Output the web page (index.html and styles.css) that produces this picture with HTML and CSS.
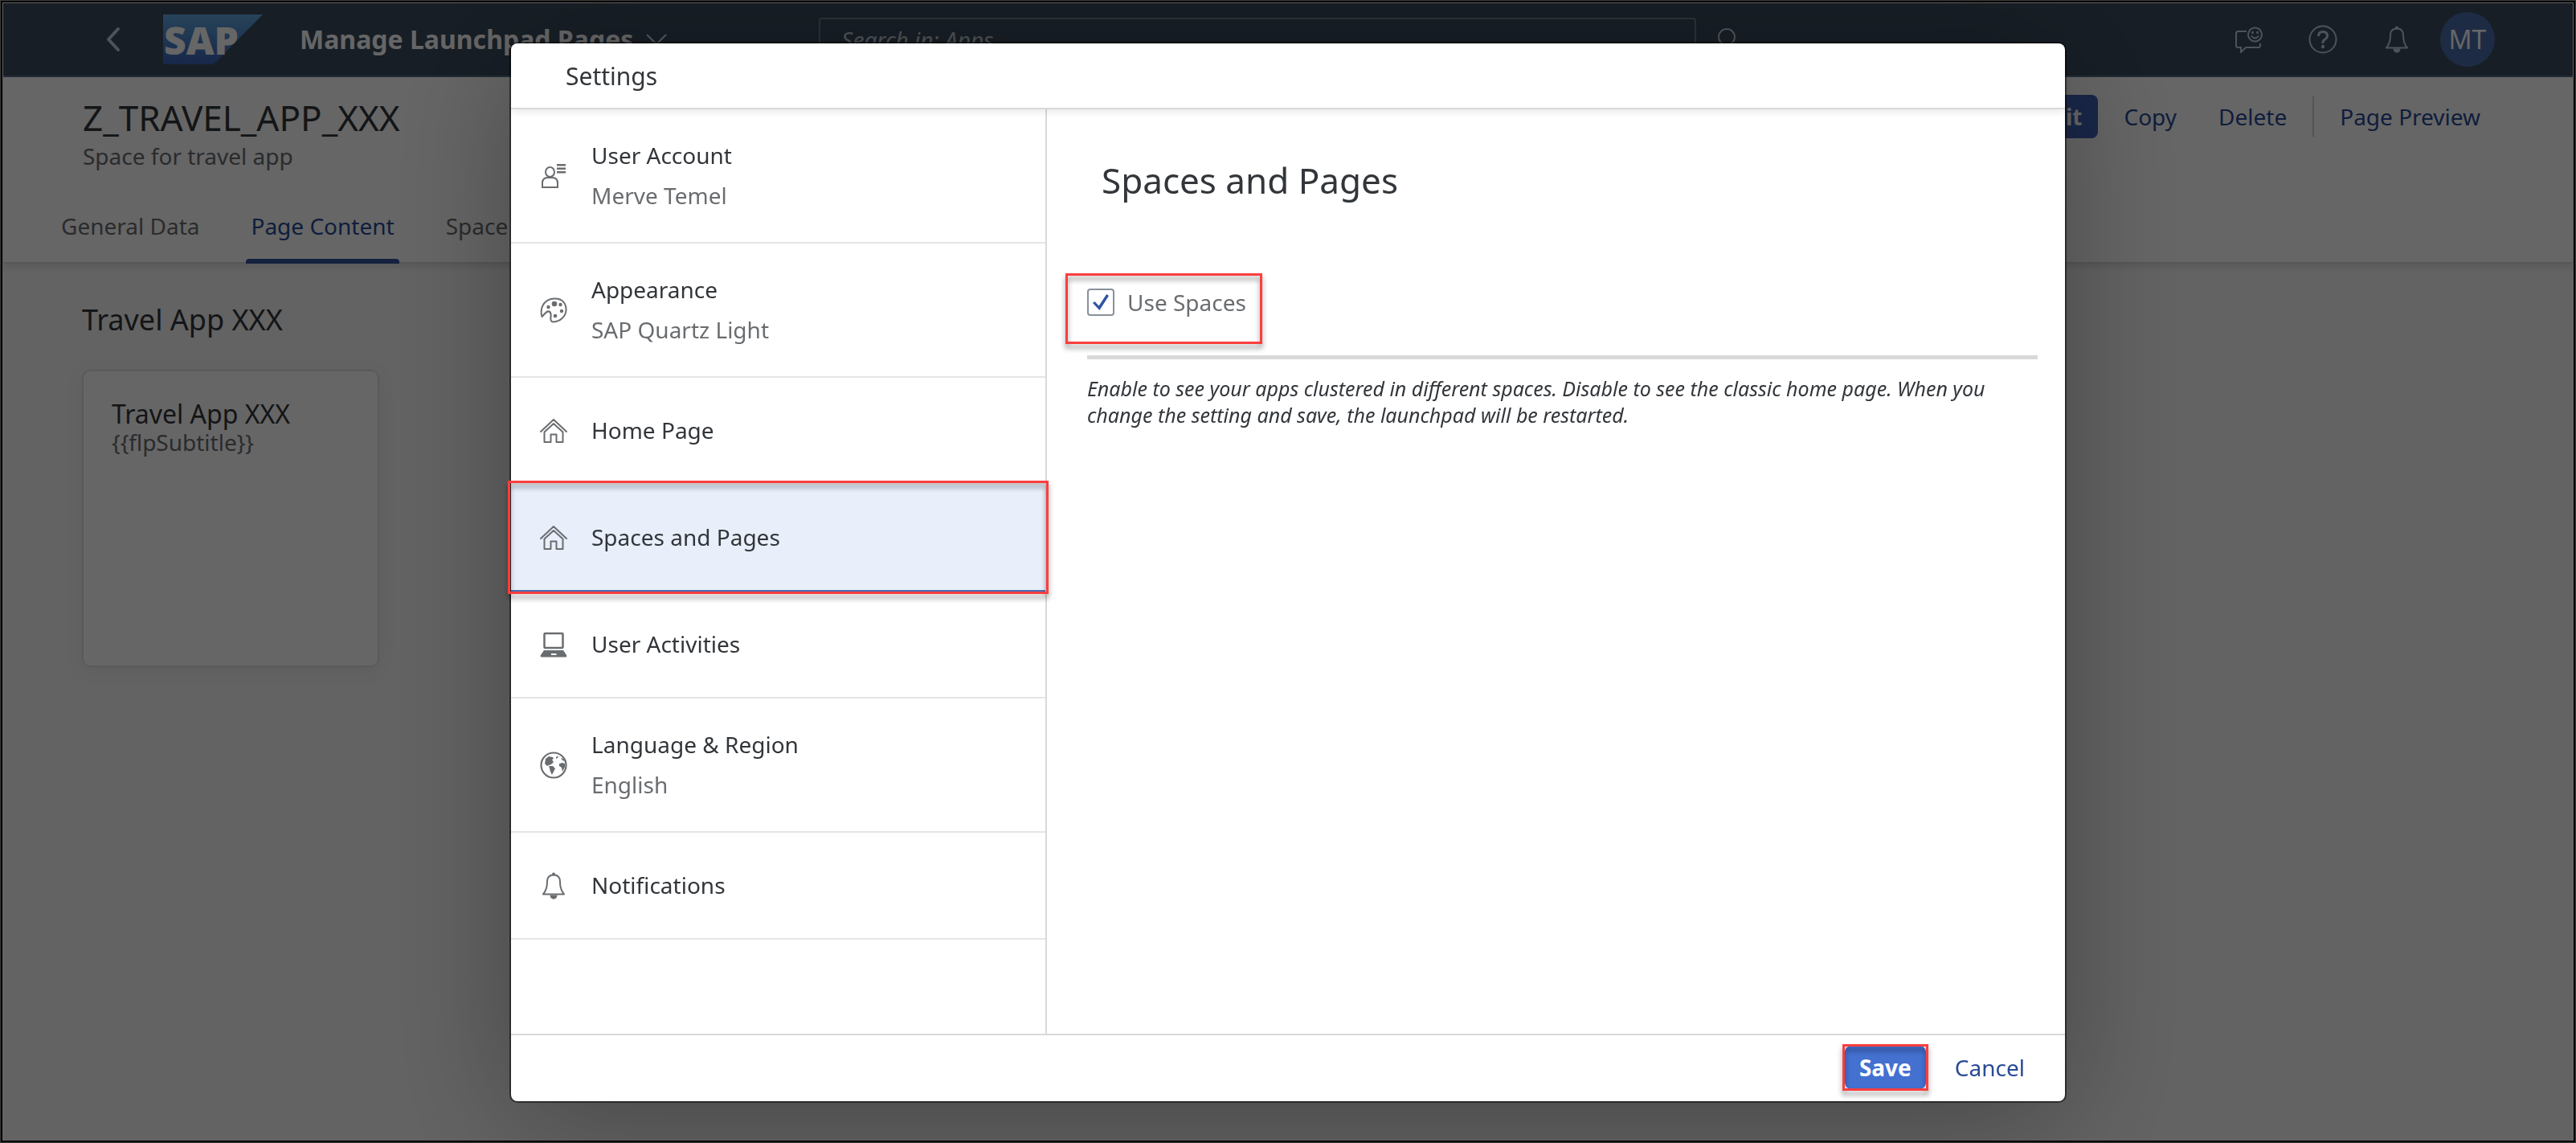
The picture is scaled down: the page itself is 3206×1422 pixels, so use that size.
FILE: index.html
```html
<!DOCTYPE html>
<html lang="en">
<head>
<meta charset="utf-8">
<meta name="viewport" content="width=device-width, initial-scale=1">
<title>Manage Launchpad Pages</title>
<link rel="stylesheet" href="styles.css">
</head>
<body>
<svg class="defs" width="0" height="0" aria-hidden="true">
  <defs>
    <linearGradient id="sap-blue" x1="0" y1="0" x2="0" y2="1">
      <stop offset="0" stop-color="#62a9e0"/>
      <stop offset="1" stop-color="#3a62b8"/>
    </linearGradient>
    <symbol id="i-home" viewBox="0 0 34 34">
      <path d="M1 18 17 3l16 15M5.500 31V18.500L17 8l11.500 10.500V31h-8V21.500h-7V31z" fill="none" stroke="currentColor" stroke-width="2" stroke-linejoin="round" stroke-linecap="round"/>
    </symbol>
    <symbol id="i-bell" viewBox="0 0 34 34">
      <path d="M17 3.500c-5 0-8 3-8 8.500 0 7-1 11-5 15.500h26c-4-4.500-5-8.500-5-15.500 0-5.500-3-8.500-8-8.500z" fill="none" stroke="currentColor" stroke-width="2" stroke-linejoin="round"/>
      <circle cx="17" cy="2.500" r="2" fill="currentColor"/>
      <path d="M12.500 28.500h9c0 3-2 5-4.500 5s-4.500-2-4.500-5z" fill="currentColor"/>
    </symbol>
  </defs>
</svg>

<div class="page">
  <header class="shell">
    <button class="shell-btn back" aria-label="Back">
      <svg width="20" height="32" viewBox="0 0 20 32"><path d="M17 3 5 16l12 13" fill="none" stroke="currentColor" stroke-width="4" stroke-linecap="round" stroke-linejoin="round"/></svg>
    </button>
    <svg class="logo" width="124" height="62" viewBox="0 0 124 62" role="img" aria-label="SAP">
      <path d="M0 0h124L63 62H0z" fill="url(#sap-blue)"/>
      <text class="logo-text" x="1" y="50">SAP</text>
    </svg>
    <h1 class="shell-title">Manage Launchpad Pages</h1>
    <svg class="title-arrow" width="26" height="14" viewBox="0 0 26 14"><path d="M1 1l12 12L25 1" fill="none" stroke="currentColor" stroke-width="2"/></svg>
    <input class="search" type="text" placeholder="Search in: Apps" aria-label="Search in: Apps">
    <button class="shell-btn search-btn" aria-label="Search">
      <svg width="30" height="34" viewBox="0 0 30 34"><circle cx="14" cy="14" r="10" fill="none" stroke="currentColor" stroke-width="2"/><path d="M20 22l8 10" stroke="currentColor" stroke-width="3"/></svg>
    </button>
    <div class="shell-end">
      <button class="shell-btn" aria-label="Feedback">
        <svg width="36" height="34" viewBox="0 0 36 34" fill="none" stroke="currentColor" stroke-width="2"><path d="M15 7H4.500Q2 7 2 9.500v15Q2 27 4.500 27H8v6l6-6h15.500q2.500 0 2.500-2.500V22"/><circle cx="25.500" cy="11" r="8.500"/><path d="M21 12.500q4.500 6 9 0"/><path d="M22.500 7v3M28.500 7v3" stroke-width="2.500"/></svg>
      </button>
      <button class="shell-btn" aria-label="Help">
        <svg width="36" height="36" viewBox="0 0 36 36" fill="none" stroke="currentColor"><circle cx="18" cy="18" r="16.500" stroke-width="2"/><path d="M12.500 14q0-5.500 5.500-5.500t5.500 5q0 2.500-3 4.500t-2.500 5" stroke-width="3"/><circle cx="18" cy="27" r="2.200" fill="currentColor" stroke="none"/></svg>
      </button>
      <button class="shell-btn" aria-label="Notifications"><svg width="36" height="34"><use href="#i-bell"/></svg></button>
      <button class="avatar" aria-label="User menu">MT</button>
    </div>
  </header>

  <section class="page-head">
    <div class="head-row">
      <div>
        <h2 class="object-title">Z_TRAVEL_APP_XXX</h2>
        <p class="object-sub">Space for travel app</p>
      </div>
      <div class="actions">
        <button class="btn btn-strong">Edit</button>
        <button class="btn">Copy</button>
        <button class="btn">Delete</button>
        <span class="divider"></span>
        <button class="btn">Page Preview</button>
      </div>
    </div>
    <nav class="tabs">
      <a class="tab" href="#general">General Data</a>
      <a class="tab tab-on" href="#content">Page Content</a>
      <a class="tab" href="#space">Space Assignment</a>
    </nav>
  </section>

  <main class="content">
    <h3 class="section-title">Travel App XXX</h3>
    <article class="tile">
      <h4 class="tile-title">Travel App XXX</h4>
      <p class="tile-sub">{{flpSubtitle}}</p>
    </article>
  </main>
</div>

<div class="overlay">
  <div class="dialog" role="dialog" aria-labelledby="dlg-title">
    <header class="dlg-head"><h2 class="dlg-title" id="dlg-title">Settings</h2></header>
    <div class="dlg-body">
      <ul class="menu">
        <li><button class="item item-tall">
          <svg class="icon" viewBox="0 0 34 34"><g fill="none" stroke="currentColor" stroke-width="2"><ellipse cx="12.500" cy="12" rx="5.500" ry="6"/><path d="M3 31v-5q0-7 6.500-7h6q6.500 0 6.500 7v5z"/></g><path d="M21 2h11v2.500H21zM21 6.500h11V9H21zM21 11h11v2.500H21z" fill="currentColor"/></svg>
          <span class="item-text"><span>User Account</span><span class="muted">Merve Temel</span></span>
        </button></li>
        <li><button class="item item-tall">
          <svg class="icon" viewBox="0 0 34 34"><path d="M2.500 25C-1 13 6 3 18 2.500 28 2 33 9 32.500 17 32 25 25 31 17 31.500c-3.500 0-4-2.500-3.500-6 .500-4 0-6-2-7-3-1-4.500 2-9 6.500z" fill="none" stroke="currentColor" stroke-width="2" stroke-linejoin="round"/><g fill="currentColor"><circle cx="18" cy="9" r="3.300"/><circle cx="10.500" cy="13" r="2.200"/><circle cx="25.500" cy="10" r="2.200"/><circle cx="27" cy="18" r="2.200"/><circle cx="19" cy="24" r="2.300"/></g></svg>
          <span class="item-text"><span>Appearance</span><span class="muted">SAP Quartz Light</span></span>
        </button></li>
        <li><button class="item"><svg class="icon"><use href="#i-home"/></svg><span class="item-text">Home Page</span></button></li>
        <li><button class="item item-on marked" aria-current="true"><svg class="icon"><use href="#i-home"/></svg><span class="item-text">Spaces and Pages</span></button></li>
        <li><button class="item">
          <svg class="icon" viewBox="0 0 34 34"><rect x="5.500" y="3" width="23" height="18" rx="1" fill="none" stroke="currentColor" stroke-width="2.500"/><path fill-rule="evenodd" d="M5 24h24l4 6q1 2.500-1 2.500H2Q0 32.500 1 30zM14 28v2h7l-1-2z" fill="currentColor"/></svg>
          <span class="item-text">User Activities</span></button></li>
        <li><button class="item item-tall">
          <svg class="icon" viewBox="0 0 34 34"><circle cx="17" cy="17" r="15.500" fill="none" stroke="currentColor" stroke-width="2.200"/><path d="M7 9l4-3 5 1 1 2-2 1 2 3-3 3-3 1-2 1-3-3zM11 18l5 0 3 3-2 4-2 4-2-4-1-4zM20 7l3-2-1 3-2 1zM24 15l4-1 3 1v4l-3 6-1-5-3-2zM26 8l3 1 2 3-3-1z" fill="currentColor"/></svg>
          <span class="item-text"><span>Language &amp; Region</span><span class="muted">English</span></span>
        </button></li>
        <li><button class="item"><svg class="icon"><use href="#i-bell"/></svg><span class="item-text">Notifications</span></button></li>
      </ul>
      <section class="detail">
        <h3 class="detail-title">Spaces and Pages</h3>
        <label class="check marked"><input class="check-box" type="checkbox" checked>Use Spaces</label>
        <hr class="rule">
        <p class="hint">Enable to see your apps clustered in different spaces. Disable to see the classic home page. When you change the setting and save, the launchpad will be restarted.</p>
      </section>
    </div>
    <footer class="dlg-foot">
      <span class="save-wrap marked"><button class="btn save">Save</button></span>
      <button class="btn">Cancel</button>
    </footer>
  </div>
</div>
</body>
</html>
```
FILE: styles.css
```css
* { box-sizing: border-box; }

body {
  margin: 0;
  font-family: "Noto Sans", "Open Sans", sans-serif;
  font-size: 28px;
  line-height: 36px;
  color: #32363a;
  background: #f7f7f7;
}

/* thin black frame round the window */
body::after {
  content: "";
  position: fixed;
  inset: 0;
  z-index: 10;
  border: 1px solid #3c3c3c;
  box-shadow: inset 0 0 0 2px #000;
  pointer-events: none;
}

h1, h2, h3, h4, p, ul { margin: 0; padding: 0; font-weight: 400; }
button, input { font: inherit; color: inherit; }
button { background: none; border: 0; padding: 0; }
svg { display: block; flex: none; }
.defs { position: absolute; }

.page { min-height: 100vh; padding: 4px; }

/* shell bar */
.shell {
  display: flex;
  align-items: center;
  height: 92px;
  padding: 0 97px 0 126px;
  background: #3b4c5e;
  border-bottom: 2px solid #5b6f8c;
  color: #d1e0ee;
}
.shell-btn { color: #c4d0de; }
.logo { margin-left: 53px; overflow: visible; }
.logo-text { font: 800 48px "Open Sans", sans-serif; fill: #fff; }
.shell-title {
  margin-left: 46px;
  font-size: 32px;
  line-height: 40px;
  font-weight: 700;
  color: #fff;
}
.title-arrow { margin-left: 16px; }
.search {
  flex: 0 1 1092px;
  height: 54px;
  margin-left: 189px;
  padding: 0 26px;
  background: transparent;
  border: 2px solid #6f7d94;
  border-radius: 4px;
}
.search::placeholder { color: #c4ccd8; font-style: italic; opacity: 1; }
.search-btn { margin-left: 24px; }
.shell-end { display: flex; align-items: center; gap: 56px; margin-left: auto; }
.avatar {
  width: 68px;
  height: 68px;
  margin-left: -20px;
  border-radius: 50%;
  background: #4a6bab;
  color: #fff;
  font-size: 32px;
}

/* page header */
.page-head {
  position: relative;
  background: #fff;
  border-bottom: 2px solid #d9d9d9;
  box-shadow: 0 4px 8px rgba(0, 0, 0, .1);
}
.head-row { display: flex; justify-content: space-between; padding: 26px 95px 22px 99px; }
.object-title { font-size: 44px; line-height: 48px; }
.object-sub { margin-top: 6px; color: #6a6d70; }
.actions { display: flex; align-items: center; height: 46px; gap: 12px; }
.btn {
  height: 54px;
  padding: 0 20px;
  border-radius: 8px;
  color: #2a4a96;
}
.btn-strong { background: #3f62b5; color: #fff; font-weight: 700; }
.divider { width: 2px; height: 50px; background: #d0d0d0; }
.tabs { display: flex; gap: 52px; padding: 0 66px; }
.tab {
  position: relative;
  height: 92px;
  padding: 29px 6px 0;
  color: #6a6d70;
  text-decoration: none;
}
.tab-on { color: #2a4a96; }
.tab-on::after {
  content: "";
  position: absolute;
  inset: auto 0 -2px;
  height: 6px;
  border-radius: 4px 4px 0 0;
  background: #34549f;
}

/* page content */
.content { padding: 46px 98px; }
.section-title { font-size: 36px; line-height: 48px; }
.tile {
  width: 370px;
  min-height: 370px;
  margin-top: 38px;
  padding: 35px;
  background: #fff;
  border: 2px solid #e0e0e0;
  border-radius: 10px;
  box-shadow: 0 4px 24px rgba(0, 0, 0, .06);
}
.tile-title { font-size: 32px; }
.tile-sub { line-height: 34px; color: #6a6d70; }

/* settings dialog */
.overlay {
  position: fixed;
  inset: 0;
  display: flex;
  justify-content: center;
  padding: 54px 48px 52px;
  background: rgba(0, 0, 0, .6);
}
.dialog {
  display: flex;
  flex-direction: column;
  width: 100%;
  max-width: 1934px;
  background: #fff;
  border-radius: 8px;
  box-shadow: 0 0 0 2px rgba(0, 0, 0, .5), 0 20px 160px rgba(0, 0, 0, .3);
}
.dlg-head {
  position: relative;
  padding: 21px 68px 19px;
  border-bottom: 2px solid #d9d9d9;
  box-shadow: 0 4px 8px rgba(0, 0, 0, .08);
}
.dlg-title { font-size: 30px; line-height: 40px; }
.dlg-body { display: flex; flex: 1; }
.menu {
  flex: 0 0 667px;
  list-style: none;
  border-right: 2px solid #d9d9d9;
}
.item {
  display: flex;
  align-items: center;
  gap: 30px;
  width: 100%;
  height: 133px;
  padding: 0 36px;
  border-bottom: 2px solid #e5e5e5;
  text-align: left;
}
.item-tall { height: 167px; }
.item-on { background: #e8effa; border-bottom-color: #4a6fb5; }
.icon { width: 34px; height: 34px; color: #6a6d70; }
.item-text { display: flex; flex-direction: column; padding-bottom: 2px; line-height: 50px; }
.muted { color: #6a6d70; }

/* red highlight frames, drawn over what they surround */
.marked { position: relative; }
.marked::after {
  content: "";
  position: absolute;
  inset: -5px -4px;
  z-index: 1;
  border: 3px solid #fb3e3e;
  filter: drop-shadow(0 5px 3px rgba(0, 0, 0, .45));
  pointer-events: none;
}

.detail { flex: 1; padding: 56px 34px 40px 50px; }
.detail-title { padding-left: 18px; font-size: 44px; line-height: 64px; }
.check {
  display: inline-flex;
  align-items: center;
  gap: 16px;
  margin-top: 102px;
  color: #6a6d70;
}
.check.marked::after { inset: -18px -20px -34px -27px; }
.check-box {
  display: flex;
  align-items: center;
  justify-content: center;
  appearance: none;
  width: 34px;
  height: 34px;
  margin: 0;
  border: 2px solid #89919a;
  border-radius: 4px;
  background: #fff;
}
.check-box:checked::before {
  content: "";
  width: 20px;
  height: 20px;
  background: #2f55a4;
  clip-path: polygon(0 55%, 12% 45%, 38% 72%, 86% 0, 100% 10%, 42% 100%);
}
.rule { height: 5px; margin: 48px 0 20px; border: 0; background: #d9d9d9; }
.hint { font-size: 25px; line-height: 33px; font-style: italic; }

.dlg-foot {
  display: flex;
  align-items: center;
  justify-content: flex-end;
  gap: 16px;
  height: 84px;
  padding: 0 30px 2px;
  border-top: 2px solid #d9d9d9;
}
.save-wrap { display: flex; }
.save-wrap.marked::after { inset: -2px -3px; }
.save { padding: 0 18px; background: #4470d0; color: #fff; font-weight: 700; }
```
